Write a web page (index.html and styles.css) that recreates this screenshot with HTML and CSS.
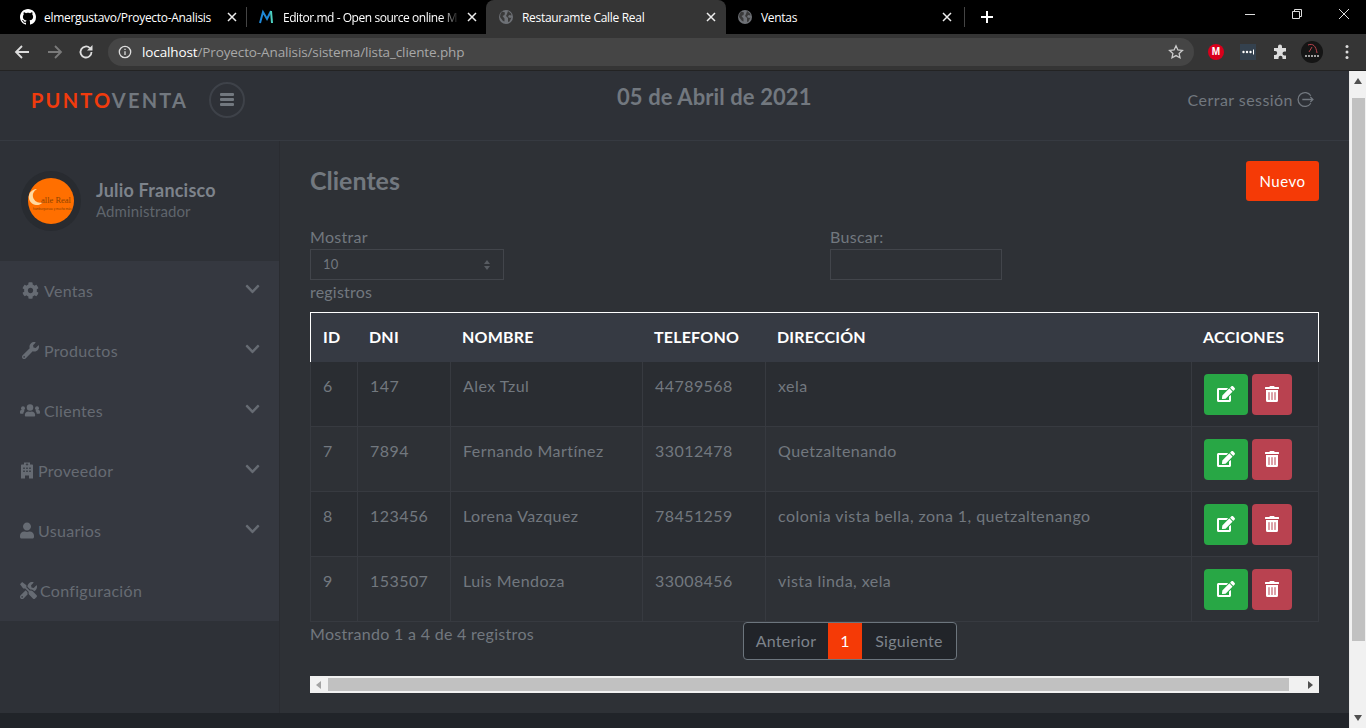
FILE: index.html
```html
<!DOCTYPE html>
<html lang="es">
<head>
    <meta charset="UTF-8">
    <title>Restauramte Calle Real</title>
    <link rel="stylesheet" href="styles.css">
</head>
<body>
<svg class="defs" width="0" height="0">
    <symbol id="i-cog" viewBox="0 0 512 512"><path d="M487.4 315.7l-42.6-24.6c4.3-23.2 4.3-47 0-70.2l42.6-24.6c4.9-2.8 7.1-8.6 5.5-14-11.1-35.6-30-67.8-54.7-94.6-3.8-4.1-10-5.1-14.8-2.3L380.8 110c-17.9-15.4-38.5-27.3-60.8-35.1V25.8c0-5.6-3.9-10.5-9.4-11.7-36.7-8.2-74.3-7.8-109.2 0-5.5 1.2-9.4 6.1-9.4 11.7V75c-22.2 7.9-42.8 19.8-60.8 35.1L88.7 85.5c-4.9-2.8-11-1.9-14.8 2.3-24.7 26.7-43.6 58.9-54.7 94.6-1.7 5.4.6 11.2 5.5 14L67.3 221c-4.3 23.2-4.3 47 0 70.2l-42.6 24.6c-4.9 2.8-7.1 8.6-5.5 14 11.1 35.6 30 67.8 54.7 94.6 3.8 4.1 10 5.1 14.8 2.3l42.6-24.6c17.9 15.4 38.5 27.3 60.8 35.1v49.2c0 5.6 3.9 10.5 9.4 11.7 36.7 8.2 74.3 7.8 109.2 0 5.5-1.2 9.4-6.1 9.4-11.7v-49.2c22.2-7.9 42.8-19.8 60.8-35.1l42.6 24.6c4.9 2.8 11 1.9 14.8-2.3 24.7-26.7 43.6-58.9 54.7-94.6 1.5-5.5-.7-11.3-5.6-14.1zM256 336c-44.1 0-80-35.9-80-80s35.9-80 80-80 80 35.9 80 80-35.9 80-80 80z"/></symbol>
    <symbol id="i-wrench" viewBox="0 0 512 512"><path d="M507.73 109.1c-2.24-9.03-13.54-12.09-20.12-5.51l-74.36 74.36-67.88-11.31-11.31-67.88 74.36-74.36c6.62-6.62 3.43-17.9-5.66-20.16-47.38-11.74-99.55.91-136.58 37.93-39.64 39.64-50.55 97.1-34.05 147.2L18.74 402.76c-24.99 24.99-24.99 65.51 0 90.5 24.99 24.99 65.51 24.99 90.5 0l213.21-213.21c50.12 16.71 107.47 5.68 147.37-34.22 37.07-37.07 49.7-89.32 37.91-136.73zM64 472c-13.25 0-24-10.75-24-24 0-13.26 10.75-24 24-24s24 10.74 24 24c0 13.25-10.75 24-24 24z"/></symbol>
    <symbol id="i-users" viewBox="0 0 640 512"><circle cx="320" cy="160" r="104"/><circle cx="96" cy="180" r="64"/><circle cx="544" cy="180" r="64"/><path d="M180 448c-14 0-24-10-24-24v-28c0-60 48-108 108-108h8c14 7 30 10 48 10s34-3 48-10h8c60 0 108 48 108 108v28c0 14-10 24-24 24zM142 272c-22 22-36 52-38 84H32c-18 0-32-14-32-32v-32c0-35 29-64 64-64h56c9 0 16 16 22 44zM498 272c22 22 36 52 38 84h72c18 0 32-14 32-32v-32c0-35-29-64-64-64h-56c-9 0-16 16-22 44z"/></symbol>
    <symbol id="i-hospital" viewBox="0 0 448 512"><path fill-rule="evenodd" d="M128 0h192v64h64c18 0 32 14 32 32v416H288v-96h-128v96H32V96c0-18 14-32 32-32h64zM208 24v24h-24v24h24v24h32V72h24V48h-24V24zM104 160v48h48v-48zm96 0v48h48v-48zm96 0v48h48v-48zM104 256v48h48v-48zm96 0v48h48v-48zm96 0v48h48v-48z"/></symbol>
    <symbol id="i-user" viewBox="0 0 448 512"><path d="M224 256c70.7 0 128-57.3 128-128S294.7 0 224 0 96 57.3 96 128s57.3 128 128 128zm89.6 32h-16.7c-22.2 10.2-46.9 16-72.9 16s-50.6-5.8-72.9-16h-16.7C60.2 288 0 348.2 0 422.4V464c0 26.5 21.5 48 48 48h352c26.5 0 48-21.5 48-48v-41.6c0-74.2-60.2-134.4-134.4-134.4z"/></symbol>
    <symbol id="i-tools" viewBox="0 0 512 512"><path d="M501.1 395.7L384 278.6c-23.1-23.1-57.6-27.6-85.4-13.9L192 158.1V96L64 0 0 64l96 128h62.1l106.6 106.6c-13.6 27.8-9.2 62.3 13.9 85.4l117.1 117.1c14.6 14.6 38.2 14.6 52.7 0l52.7-52.7c14.5-14.6 14.5-38.2-.1-52.7zM331.7 225c28.3 0 54.9 11 74.9 31l19.4 19.4c15.8-6.9 30.8-16.5 43.8-29.5 37.1-37.1 49.7-89.3 37.9-136.7-2.2-9-13.5-12.1-20.1-5.5l-74.4 74.4-67.9-11.3L334 98.9l74.4-74.4c6.6-6.6 3.4-17.9-5.7-20.2-47.4-11.7-99.6.9-136.6 37.9-28.5 28.5-41.9 66.1-41.2 103.6l82.1 82.1c8.1-1.9 16.5-2.9 24.7-2.9zm-103.9 82l-56.7-56.7L18.7 402.8c-25 25-25 65.5 0 90.5s65.5 25 90.5 0l123.6-123.6c-7.6-19.9-9.9-41.6-5-62.7zM64 472c-13.2 0-24-10.8-24-24 0-13.3 10.7-24 24-24s24 10.7 24 24c0 13.2-10.7 24-24 24z"/></symbol>
    <symbol id="i-chevron" viewBox="0 0 448 512"><path d="M207.029 381.476L12.686 187.132c-9.373-9.373-9.373-24.569 0-33.941l22.667-22.667c9.357-9.357 24.522-9.375 33.901-.04L224 284.505l154.745-154.021c9.379-9.335 24.544-9.317 33.901.04l22.667 22.667c9.373 9.373 9.373 24.569 0 33.941L240.971 381.476c-9.373 9.372-24.569 9.372-33.942 0z"/></symbol>
    <symbol id="i-edit" viewBox="0 0 576 512"><path d="M402.6 83.2l90.2 90.2c3.8 3.8 3.8 10 0 13.8L274.4 405.6l-92.8 10.3c-12.4 1.4-22.9-9.1-21.5-21.5l10.3-92.8L388.8 83.2c3.8-3.8 10-3.8 13.8 0zm162-22.9l-48.8-48.8c-15.2-15.2-39.9-15.2-55.2 0l-35.4 35.4c-3.8 3.8-3.8 10 0 13.8l90.2 90.2c3.8 3.8 10 3.8 13.8 0l35.4-35.4c15.2-15.3 15.2-40 0-55.2zM384 346.2V448H64V128h229.8c3.2 0 6.2-1.3 8.5-3.5l40-40c7.6-7.6 2.2-20.5-8.5-20.5H48C21.5 64 0 85.5 0 112v352c0 26.5 21.5 48 48 48h352c26.5 0 48-21.5 48-48V306.2c0-10.7-12.9-16-20.5-8.5l-40 40c-2.2 2.3-3.5 5.3-3.5 8.5z"/></symbol>
    <symbol id="i-trash" viewBox="0 0 448 512"><path d="M32 464a48 48 0 0 0 48 48h288a48 48 0 0 0 48-48V128H32zm272-256a16 16 0 0 1 32 0v224a16 16 0 0 1-32 0zm-96 0a16 16 0 0 1 32 0v224a16 16 0 0 1-32 0zm-96 0a16 16 0 0 1 32 0v224a16 16 0 0 1-32 0zM432 32H312l-9.4-18.7A24 24 0 0 0 281.1 0H166.8a23.72 23.72 0 0 0-21.4 13.3L136 32H16A16 16 0 0 0 0 48v32a16 16 0 0 0 16 16h416a16 16 0 0 0 16-16V48a16 16 0 0 0-16-16z"/></symbol>
    <symbol id="i-globe" viewBox="0 0 16 16"><circle cx="8" cy="8" r="7" fill="#6e7176"/><path d="M4 2.500l3 1-.5 2.500-2 1 2 2.500v3l-1.500-.5L2 8l.5-3zM10 2l3 2.500.5 2-2.500-.5-1 2 2 1 1.500-.5-2 4-1.500.5V9L8 7l1-2z" fill="#3a3a3a"/></symbol>
    <symbol id="i-x" viewBox="0 0 10 10"><path d="M1 1l8 8M9 1L1 9" fill="none" stroke="currentColor" stroke-width="1.500"/></symbol>
</svg>

<div class="tabbar">
    <div class="tab tab-first">
        <svg class="favicon" viewBox="0 0 16 16" fill="#fff"><path d="M8 0C3.58 0 0 3.58 0 8c0 3.54 2.29 6.53 5.47 7.59.4.07.55-.17.55-.38 0-.19-.01-.82-.01-1.49-2.01.37-2.53-.49-2.69-.94-.09-.23-.48-.94-.82-1.13-.28-.15-.68-.52-.01-.53.63-.01 1.08.58 1.23.82.72 1.21 1.87.87 2.33.66.07-.52.28-.87.51-1.07-1.78-.2-3.64-.89-3.64-3.95 0-.87.31-1.59.82-2.15-.08-.2-.36-1.02.08-2.12 0 0 .67-.21 2.2.82.64-.18 1.32-.27 2-.27.68 0 1.36.09 2 .27 1.53-1.04 2.2-.82 2.2-.82.44 1.1.16 1.92.08 2.12.51.56.82 1.27.82 2.15 0 3.07-1.87 3.75-3.65 3.95.29.25.54.73.54 1.48 0 1.07-.01 1.93-.01 2.2 0 .21.15.46.55.38A8.013 8.013 0 0016 8c0-4.42-3.58-8-8-8z"/></svg>
        <span class="tab-title">elmergustavo/Proyecto-Analisis</span>
        <svg class="tab-close"><use href="#i-x"/></svg>
    </div>
    <div class="tab-sep"></div>
    <div class="tab tab-second">
        <svg class="favicon" viewBox="0 0 16 16"><path d="M1 14L4 3l4 7 4-8" fill="none" stroke="#1e88d8" stroke-width="2"/><path d="M12 2l1 12" fill="none" stroke="#4dd0c0" stroke-width="2"/></svg>
        <span class="tab-title tab-fade">Editor.md - Open source online M</span>
        <svg class="tab-close"><use href="#i-x"/></svg>
    </div>
    <div class="tab tab-active">
        <svg class="favicon"><use href="#i-globe"/></svg>
        <span class="tab-title">Restauramte Calle Real</span>
        <svg class="tab-close"><use href="#i-x"/></svg>
    </div>
    <div class="tab tab-last">
        <svg class="favicon"><use href="#i-globe"/></svg>
        <span class="tab-title">Ventas</span>
        <svg class="tab-close"><use href="#i-x"/></svg>
    </div>
    <div class="tab-sep"></div>
    <svg class="new-tab" viewBox="0 0 14 14"><path d="M7 1v12M1 7h12" stroke="#fff" stroke-width="2"/></svg>
    <div class="window-btns">
        <svg viewBox="0 0 12 12"><path d="M1 6.500h10" stroke="#ddd" stroke-width="1"/></svg>
        <svg viewBox="0 0 12 12"><path d="M1.500 3.500h7v7h-7zM3.500 3.500v-2h7v7h-2" fill="none" stroke="#ddd"/></svg>
        <svg viewBox="0 0 12 12"><path d="M1 1l10 10M11 1L1 11" stroke="#ddd"/></svg>
    </div>
</div>

<div class="toolbar">
    <svg class="nav-btn" viewBox="0 0 16 16"><path d="M15 8H2M8 2L2 8l6 6" fill="none" stroke="#ddd" stroke-width="1.800"/></svg>
    <svg class="nav-btn" viewBox="0 0 16 16"><path d="M1 8h13M8 2l6 6-6 6" fill="none" stroke="#7a7a7a" stroke-width="1.800"/></svg>
    <svg class="nav-btn nav-reload" viewBox="0 0 16 16"><path d="M13.500 8a5.500 5.500 0 1 1-1.600-3.900" fill="none" stroke="#ddd" stroke-width="1.800"/><path d="M14.500 1v5.500H9z" fill="#ddd"/></svg>
    <div class="omnibox">
        <svg class="info" viewBox="0 0 16 16"><circle cx="8" cy="8" r="6.500" fill="none" stroke="#ddd" stroke-width="1.500"/><path d="M8 7v4.500M8 4.300v1.500" stroke="#ddd" stroke-width="1.500"/></svg>
        <span class="url"><b>localhost</b>/Proyecto-Analisis/sistema/lista_cliente.php</span>
        <svg class="star" viewBox="0 0 16 16"><path d="M8 1.800l1.900 4.100 4.500.5-3.300 3 .9 4.400L8 11.600l-4 2.200.9-4.400-3.300-3 4.500-.5z" fill="none" stroke="#ccc" stroke-width="1.300"/></svg>
    </div>
    <div class="extensions">
        <span class="ext-mega">M</span>
        <svg class="ext-dots" viewBox="0 0 16 16"><rect width="16" height="16" fill="#34414e"/><circle cx="3.500" cy="8" r="1.200" fill="#fff"/><circle cx="7" cy="8" r="1.200" fill="#fff"/><circle cx="10.500" cy="8" r="1.200" fill="#fff"/><path d="M13.500 5.500v5" stroke="#fff"/></svg>
        <svg class="ext-puzzle" viewBox="0 0 16 16"><path d="M6 2.500a2 2 0 0 1 4 0V4h4v3.500h-1.500a2 2 0 0 0 0 4H14V15h-3.500v-1.200a2 2 0 0 0-4 0V15H2v-4h1.200a2 2 0 0 0 0-4H2V4h4z" fill="#ddd"/></svg>
        <svg class="ext-avatar" viewBox="0 0 22 22"><circle cx="11" cy="11" r="11" fill="#151515"/><path d="M7 4c5-2 8 1 9 8M11 6l-3 5" fill="none" stroke="#b9424a" stroke-width="1"/><path d="M4 15h14" stroke="#ccc" stroke-width="1.500" stroke-dasharray="2 1"/></svg>
        <svg class="ext-menu" viewBox="0 0 4 16"><circle cx="2" cy="2.500" r="1.500" fill="#ddd"/><circle cx="2" cy="8" r="1.500" fill="#ddd"/><circle cx="2" cy="13.500" r="1.500" fill="#ddd"/></svg>
    </div>
</div>

<div class="viewport">
    <div class="page">
        <header class="topbar">
            <div class="logo"><span class="logo-red">PUNTO</span>VENTA</div>
            <button class="burger"><span></span><span></span><span></span></button>
            <div class="today">05 de Abril de 2021</div>
            <a class="logout">Cerrar sessión
                <svg viewBox="0 0 16 16"><path d="M13 4.500a6.500 6.500 0 1 0 0 7" fill="none" stroke="currentColor" stroke-width="1.200"/><path d="M5 8h10M12.500 5.500L15 8l-2.500 2.500" fill="none" stroke="currentColor" stroke-width="1.200"/></svg>
            </a>
        </header>
        <div class="layout">
            <aside class="sidebar">
                <div class="profile">
                    <div class="avatar">
                        <svg viewBox="0 0 46 46">
                            <circle cx="23" cy="23" r="23" fill="#ff6f00"/>
                            <path d="M9 11a8 8 0 1 0 6 13 7 7 0 0 1-6-13z" fill="#ffd9a0"/>
                            <text x="13" y="25" class="avatar-text">alle Real</text>
                            <text x="5" y="32" class="avatar-sub">hamburguesas y mucho más</text>
                        </svg>
                    </div>
                    <div class="user-info">
                        <div class="user-name">Julio Francisco</div>
                        <div class="user-role">Administrador</div>
                    </div>
                </div>
                <nav class="menu">
                    <a class="menu-item"><svg class="menu-icon"><use href="#i-cog"/></svg><span class="gap-a">Ventas</span><svg class="chevron"><use href="#i-chevron"/></svg></a>
                    <a class="menu-item"><svg class="menu-icon"><use href="#i-wrench"/></svg><span class="gap-a">Productos</span><svg class="chevron"><use href="#i-chevron"/></svg></a>
                    <a class="menu-item"><svg class="menu-icon wide"><use href="#i-users"/></svg><span class="gap-b">Clientes</span><svg class="chevron"><use href="#i-chevron"/></svg></a>
                    <a class="menu-item"><svg class="menu-icon narrow"><use href="#i-hospital"/></svg><span class="gap-b">Proveedor</span><svg class="chevron"><use href="#i-chevron"/></svg></a>
                    <a class="menu-item"><svg class="menu-icon narrow"><use href="#i-user"/></svg><span class="gap-b">Usuarios</span><svg class="chevron"><use href="#i-chevron"/></svg></a>
                    <a class="menu-item"><svg class="menu-icon tools"><use href="#i-tools"/></svg><span class="gap-c">Configuración</span></a>
                </nav>
            </aside>
            <main class="content">
                <div class="title-row">
                    <h1>Clientes</h1>
                    <button class="btn-new">Nuevo</button>
                </div>
                <div class="filters">
                    <label class="filter-len">Mostrar
                        <div class="select-box"><span class="select-value">10</span>
                            <svg viewBox="0 0 8 12"><path d="M4 1l3 4H1zM4 11L1 7h6z" fill="#585c62"/></svg>
                        </div>
                    </label>
                    <label class="filter-search">Buscar:
                        <div class="search-box"></div>
                    </label>
                </div>
                <div class="registros">registros</div>
                <table class="grid">
                    <colgroup>
                        <col class="c-id"><col class="c-dni"><col class="c-nom"><col class="c-tel"><col class="c-dir"><col class="c-acc">
                    </colgroup>
                    <thead>
                        <tr><th>ID</th><th>DNI</th><th>NOMBRE</th><th>TELEFONO</th><th>DIRECCIÓN</th><th>ACCIONES</th></tr>
                    </thead>
                    <tbody>
                        <tr><td>6</td><td>147</td><td>Alex Tzul</td><td>44789568</td><td>xela</td>
                            <td class="actions"><button class="btn-edit"><svg><use href="#i-edit"/></svg></button><button class="btn-del"><svg><use href="#i-trash"/></svg></button></td></tr>
                        <tr><td>7</td><td>7894</td><td>Fernando Martínez</td><td>33012478</td><td>Quetzaltenando</td>
                            <td class="actions"><button class="btn-edit"><svg><use href="#i-edit"/></svg></button><button class="btn-del"><svg><use href="#i-trash"/></svg></button></td></tr>
                        <tr><td>8</td><td>123456</td><td>Lorena Vazquez</td><td>78451259</td><td>colonia vista bella, zona 1, quetzaltenango</td>
                            <td class="actions"><button class="btn-edit"><svg><use href="#i-edit"/></svg></button><button class="btn-del"><svg><use href="#i-trash"/></svg></button></td></tr>
                        <tr><td>9</td><td>153507</td><td>Luis Mendoza</td><td>33008456</td><td>vista linda, xela</td>
                            <td class="actions"><button class="btn-edit"><svg><use href="#i-edit"/></svg></button><button class="btn-del"><svg><use href="#i-trash"/></svg></button></td></tr>
                    </tbody>
                </table>
                <div class="table-foot">
                    <div class="info-text">Mostrando 1 a 4 de 4 registros</div>
                    <div class="pager">
                        <a class="pager-prev">Anterior</a><a class="current">1</a><a class="pager-next">Siguiente</a>
                    </div>
                </div>
                <div class="hscroll">
                    <svg class="harrow" viewBox="0 0 6 8"><path d="M5 0v8L0 4z" fill="#a3a3a3"/></svg>
                    <div class="hthumb"></div>
                    <svg class="harrow" viewBox="0 0 6 8"><path d="M1 0v8l5-4z" fill="#505050"/></svg>
                </div>
            </main>
        </div>
        <div class="page-foot"></div>
    </div>
    <div class="vscroll">
        <svg viewBox="0 0 8 6"><path d="M4 0l4 6H0z" fill="#505050"/></svg>
        <div class="vthumb"></div>
        <svg viewBox="0 0 8 6"><path d="M0 0h8L4 6z" fill="#505050"/></svg>
    </div>
</div>
</body>
</html>
```

FILE: styles.css
```css
* {
    box-sizing: border-box;
}
html, body {
    margin: 0;
    height: 728px;
    overflow: hidden;
}
body {
    font-family: Lato, sans-serif;
    font-size: 16px;
    color: #72787f;
    background-color: #2e3136;
    display: flex;
    flex-direction: column;
}
.defs {
    position: absolute;
}
button {
    border: none;
    cursor: pointer;
    font-family: inherit;
}

/* browser chrome */
.tabbar {
    height: 34px;
    background-color: #000;
    display: flex;
    align-items: center;
    color: #fff;
    font-family: "Open Sans", sans-serif;
    font-size: 12px;
    padding-left: 8px;
    flex: none;
}
.tab {
    width: 238px;
    height: 34px;
    padding: 0 9px 0 12px;
    display: flex;
    align-items: center;
    flex: none;
}
.tab-second {
    width: 239px;
}
.tab-active {
    background-color: #353535;
    border-radius: 8px 8px 0 0;
    width: 240px;
    padding-right: 10px;
}
.tab-last {
    padding-left: 11px;
    padding-right: 12px;
}
.tab-sep {
    width: 1px;
    height: 20px;
    background-color: #444;
    flex: none;
}
.favicon {
    width: 16px;
    height: 16px;
    flex: none;
    margin-right: 8px;
}
.tab-title {
    flex: 1;
    white-space: nowrap;
    letter-spacing: -0.3px;
}
.tab-fade {
    letter-spacing: -0.45px;
    -webkit-mask-image: linear-gradient(to right, #000 90%, transparent);
    mask-image: linear-gradient(to right, #000 90%, transparent);
}
.tab-close {
    width: 10px;
    height: 10px;
    color: #eee;
    flex: none;
    margin-left: 8px;
}
.new-tab {
    width: 14px;
    height: 14px;
    margin-left: 15px;
}
.window-btns {
    margin-left: auto;
    display: flex;
    gap: 35px;
    padding-right: 16px;
    margin-top: -6px;
}
.window-btns svg {
    width: 12px;
    height: 12px;
}
.toolbar {
    height: 37px;
    background-color: #353535;
    border-bottom: 1px solid #232323;
    display: flex;
    align-items: center;
    padding: 0 0 1px 14px;
    flex: none;
    gap: 17px;
}
.nav-btn {
    width: 16px;
    height: 16px;
    flex: none;
}
.nav-reload {
    margin-left: -2px;
}
.omnibox {
    width: 1086px;
    height: 28px;
    border-radius: 14px;
    background-color: #454545;
    display: flex;
    align-items: center;
    padding: 0 10px;
    margin-left: -3px;
    flex: none;
    font-family: "Open Sans", sans-serif;
    font-size: 13.5px;
    color: #a8a8a8;
}
.info {
    width: 14px;
    height: 14px;
    margin-right: 10px;
}
.url {
    flex: 1;
    letter-spacing: -0.12px;
}
.url b {
    color: #fff;
    font-weight: 400;
}
.star {
    width: 16px;
    height: 16px;
}
.extensions {
    display: flex;
    align-items: center;
    margin-left: -3px;
}
.ext-mega {
    width: 16px;
    height: 16px;
    border-radius: 50%;
    background-color: #d9001b;
    color: #fff;
    font: bold 10px/16px "Liberation Sans", sans-serif;
    text-align: center;
}
.ext-dots {
    width: 16px;
    height: 16px;
    margin-left: 16px;
}
.ext-puzzle {
    width: 16px;
    height: 16px;
    margin-left: 16px;
}
.ext-avatar {
    width: 22px;
    height: 22px;
    margin-left: 13px;
}
.ext-menu {
    width: 4px;
    height: 16px;
    margin-left: 22px;
}

/* page */
.viewport {
    flex: 1;
    display: flex;
    min-height: 0;
}
.page {
    flex: 1;
    display: flex;
    flex-direction: column;
    min-width: 0;
}
.topbar {
    height: 70px;
    display: flex;
    align-items: center;
    border-bottom: 1px solid #363a41;
    background-color: #2e3137;
    flex: none;
    padding: 0 0 12px 31px;
}
.logo {
    font-size: 20px;
    font-weight: 700;
    letter-spacing: 2.2px;
    color: #72787f;
    width: 178px;
}
.logo-red {
    color: #f13b0d;
}
.burger {
    width: 36px;
    height: 36px;
    border-radius: 50%;
    border: 2px solid #3e4249;
    background: none;
    display: flex;
    flex-direction: column;
    justify-content: center;
    align-items: center;
    gap: 2px;
    padding: 0;
}
.burger span {
    width: 14px;
    height: 3px;
    background-color: #72787f;
    border-radius: 1px;
}
.today {
    font-size: 22px;
    font-weight: 700;
    letter-spacing: 0.1px;
    margin-left: 372px;
    margin-top: -6px;
}
.logout {
    margin-left: auto;
    margin-right: 35px;
    display: flex;
    align-items: center;
    gap: 4px;
    font-size: 16px;
    letter-spacing: 0.45px;
}
.logout svg {
    width: 17px;
    height: 17px;
}
.layout {
    flex: 1;
    display: flex;
    min-height: 0;
}
.sidebar {
    width: 280px;
    flex: none;
    background-color: #2e3137;
    border-right: 1px solid #2a2c31;
}
.profile {
    height: 120px;
    display: flex;
    align-items: center;
    padding-left: 21px;
    gap: 15px;
}
.avatar {
    width: 60px;
    height: 60px;
    border-radius: 50%;
    background-color: #282b30;
    display: flex;
    align-items: center;
    justify-content: center;
}
.avatar svg {
    width: 46px;
    height: 46px;
}
.avatar-text {
    font: 8.5px "Liberation Serif", serif;
    fill: #8f4400;
}
.avatar-sub {
    font: 3px "Liberation Sans", sans-serif;
    fill: #8a3f00;
}
.user-info {
    padding-bottom: 3px;
}
.user-name {
    font-size: 18px;
    font-weight: 700;
    letter-spacing: 0.2px;
    color: #7d838b;
}
.user-role {
    font-size: 15px;
    color: #5f656c;
    margin-top: 1px;
    letter-spacing: 0.1px;
}
.menu {
    background-color: #353840;
}
.menu-item {
    height: 60px;
    display: flex;
    align-items: center;
    padding: 0 19px 2px 20px;
    color: #666b73;
    letter-spacing: 0.3px;
}
.menu-icon {
    width: 17px;
    height: 17px;
    fill: #666b73;
    flex: none;
    margin-left: 2px;
}
.menu-icon.wide {
    width: 20px;
    margin-left: 0;
}
.menu-icon.narrow {
    width: 14px;
    margin-left: 0;
}
.menu-icon.tools {
    margin-left: 0;
}
.gap-a {
    margin-left: 5px;
}
.gap-b {
    margin-left: 4px;
}
.gap-c {
    margin-left: 3px;
}
.chevron {
    width: 15px;
    height: 16px;
    fill: #666b73;
    margin-left: auto;
    margin-top: -2px;
}
.content {
    flex: 1;
    min-width: 0;
    padding: 20px 30px 0 30px;
    background-color: #2e3136;
}
.title-row {
    height: 40px;
    display: flex;
    align-items: center;
    justify-content: space-between;
}
h1 {
    margin: 0 0 2px;
    font-size: 25px;
    font-weight: 700;
    color: #72787f;
}
.btn-new {
    width: 73px;
    height: 40px;
    background-color: #f53a06;
    color: #fff;
    font-size: 15px;
    letter-spacing: 0.5px;
    border-radius: 3px;
}
.filters {
    margin-top: 24px;
    display: flex;
    font-size: 16px;
    line-height: 24px;
    letter-spacing: 0.3px;
}
.filter-len {
    width: 520px;
}
.select-box {
    width: 194px;
    height: 31px;
    border: 1px solid #42454b;
    font-size: 13px;
    padding: 0 12px;
    display: flex;
    align-items: center;
    justify-content: space-between;
}
.select-value {
    margin-bottom: 2px;
}
.select-box svg {
    width: 8px;
    height: 12px;
}
.search-box {
    width: 172px;
    height: 31px;
    border: 1px solid #42454b;
}
.registros {
    margin-top: 1px;
    height: 21px;
    line-height: 21px;
    margin-bottom: 10px;
    letter-spacing: 0.2px;
}
.grid {
    width: 1009px;
    table-layout: fixed;
    border-collapse: separate;
    border-spacing: 0;
}
.c-id { width: 48px; }
.c-dni { width: 93px; }
.c-nom { width: 192px; }
.c-tel { width: 123px; }
.c-dir { width: 426px; }
.c-acc { width: 127px; }
th {
    height: 50px;
    background-color: #363a43;
    color: #fff;
    font-weight: 700;
    font-size: 16px;
    letter-spacing: 0.2px;
    text-align: left;
    padding: 0 0 2px 11px;
    border-top: 1px solid #fff;
}
th:first-child {
    border-left: 1px solid #fff;
    padding-left: 12px;
}
th:last-child {
    border-right: 1px solid #fff;
}
td {
    height: 65px;
    background-color: #2a2d32;
    border-bottom: 1px solid #373a40;
    border-right: 1px solid #373a40;
    padding: 0 0 18px 12px;
    color: #72787f;
    font-size: 16px;
    letter-spacing: 0.44px;
    white-space: nowrap;
}
td:first-child {
    border-left: 1px solid #373a40;
}
tr:nth-child(even) td {
    background-color: #2e3136;
}
td.actions {
    padding: 0 0 0 12px;
}
.actions button {
    height: 41px;
    border-radius: 4px;
    display: inline-flex;
    align-items: center;
    justify-content: center;
    vertical-align: middle;
    padding: 0;
}
.actions svg {
    width: 18px;
    height: 16px;
    fill: #fff;
}
.btn-edit {
    width: 44px;
    background-color: #28a745;
    margin-right: 4px;
}
.btn-del {
    width: 40px;
    background-color: #b94250;
}
.table-foot {
    display: flex;
    height: 54px;
}
.info-text {
    width: 433px;
    padding-top: 2px;
    letter-spacing: 0.3px;
}
.pager {
    display: flex;
    height: 38px;
    border: 1px solid #6c757d;
    border-radius: 4px;
    overflow: hidden;
    background-color: #212429;
    letter-spacing: 0.3px;
}
.pager a {
    line-height: 36px;
    text-align: center;
    color: #7d838b;
}
.pager-prev {
    width: 84px;
}
.pager-next {
    width: 94px;
}
.pager .current {
    width: 34px;
    background-color: #f53a06;
    color: #fff;
}
.hscroll {
    width: 1009px;
    height: 17px;
    background-color: #f1f1f1;
    display: flex;
    align-items: center;
    justify-content: space-between;
    padding: 0 6px;
}
.harrow {
    width: 6px;
    height: 8px;
    flex: none;
}
.hthumb {
    width: 961px;
    height: 13px;
    background-color: #c1c1c1;
    margin-right: 17px;
    margin-left: 4px;
}
.page-foot {
    height: 15px;
    background-color: #212429;
    flex: none;
}
.vscroll {
    width: 17px;
    flex: none;
    background-color: #f1f1f1;
    display: flex;
    flex-direction: column;
    align-items: center;
    padding-top: 7px;
    border-left: 1px solid #e8e8e8;
}
.vscroll svg {
    width: 8px;
    height: 6px;
    flex: none;
}
.vthumb {
    width: 13px;
    height: 543px;
    margin-top: 14px;
    background-color: #c1c1c1;
}
.vscroll svg:last-child {
    margin-top: 74px;
}
```
